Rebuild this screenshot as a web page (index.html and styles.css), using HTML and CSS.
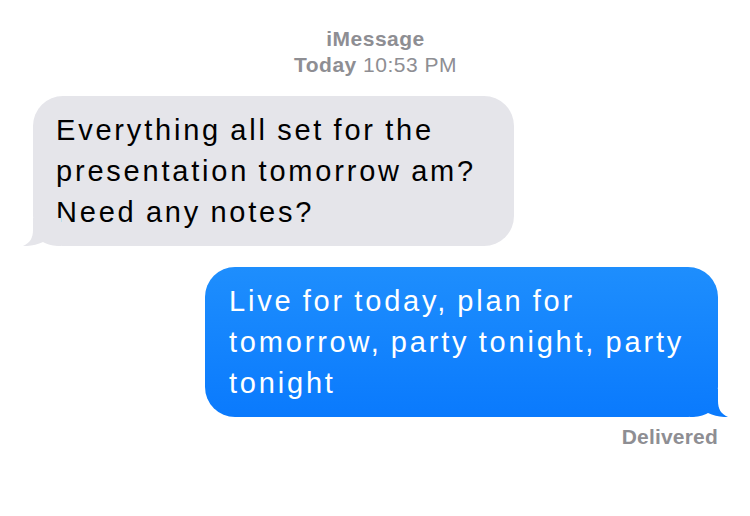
FILE: index.html
```html
<!DOCTYPE html>
<html lang="en">
<head>
<meta charset="utf-8">
<title>iMessage</title>
<link rel="stylesheet" href="styles.css">
</head>
<body>
<main class="chat">
  <header class="meta">
    <div class="meta-title">iMessage</div>
    <div class="meta-time"><strong>Today</strong> 10:53 PM</div>
  </header>

  <div class="bubble them">
    Everything all set for the presentation tomorrow am? Need any notes?
    <svg class="tail" width="40" height="28" viewBox="0 0 40 28" aria-hidden="true">
      <path d="M12,0 L12,12 C12,20 9,25 2,28 C9,28.4 16,26.6 22,24 C27,26.6 32,28 40,28 L40,0 Z"/>
    </svg>
  </div>

  <div class="bubble me">
    Live for today, plan for tomorrow, party tonight, party tonight
    <svg class="tail" width="40" height="28" viewBox="0 0 40 28" aria-hidden="true">
      <defs>
        <linearGradient id="blueTail" x1="0" y1="0" x2="0" y2="1">
          <stop offset="0" stop-color="#0e7efd"/>
          <stop offset="1" stop-color="#0a7afd"/>
        </linearGradient>
      </defs>
      <path fill="url(#blueTail)" d="M12,0 L12,12 C12,20 9,25 2,28 C9,28.4 16,26.6 22,24 C27,26.6 32,28 40,28 L40,0 Z"/>
    </svg>
  </div>

  <div class="status">Delivered</div>
</main>
</body>
</html>
```

FILE: styles.css
```css
* {
  box-sizing: border-box;
}

html, body {
  margin: 0;
  padding: 0;
  background: #ffffff;
}

body {
  font-family: "Liberation Sans", Arial, Helvetica, sans-serif;
  width: 750px;
  height: 516px;
  overflow: hidden;
}

.chat {
  display: flex;
  flex-direction: column;
  padding: 26px 32px 0 33px;
}

.meta {
  align-self: stretch;
  text-align: center;
  color: #8e8e93;
  font-size: 21px;
  line-height: 26px;
  letter-spacing: 0.5px;
}

.meta-title {
  font-weight: bold;
}

.meta-time strong {
  font-weight: bold;
}

.bubble {
  position: relative;
  padding: 14px 32px 13px 23px;
  font-size: 29px;
  line-height: 41px;
  letter-spacing: 2.8px;
  word-spacing: -1.5px;
  border-radius: 30px;
}

.tail {
  position: absolute;
  bottom: 0;
  display: block;
}

.them {
  align-self: flex-start;
  max-width: 481px;
  margin-top: 18px;
  background: #e5e5ea;
  color: #000000;
}

.them .tail {
  left: -12px;
  fill: #e5e5ea;
}

.me {
  align-self: flex-end;
  max-width: 513px;
  margin-top: 21px;
  padding-left: 24px;
  background: linear-gradient(to bottom, #1e8efd, #0a7afd);
  color: #ffffff;
}

.me .tail {
  right: -12px;
  transform: scaleX(-1);
}

.status {
  align-self: flex-end;
  margin-top: 7px;
  font-size: 21px;
  line-height: 26px;
  font-weight: bold;
  color: #8e8e93;
  letter-spacing: 0.2px;
}
```
